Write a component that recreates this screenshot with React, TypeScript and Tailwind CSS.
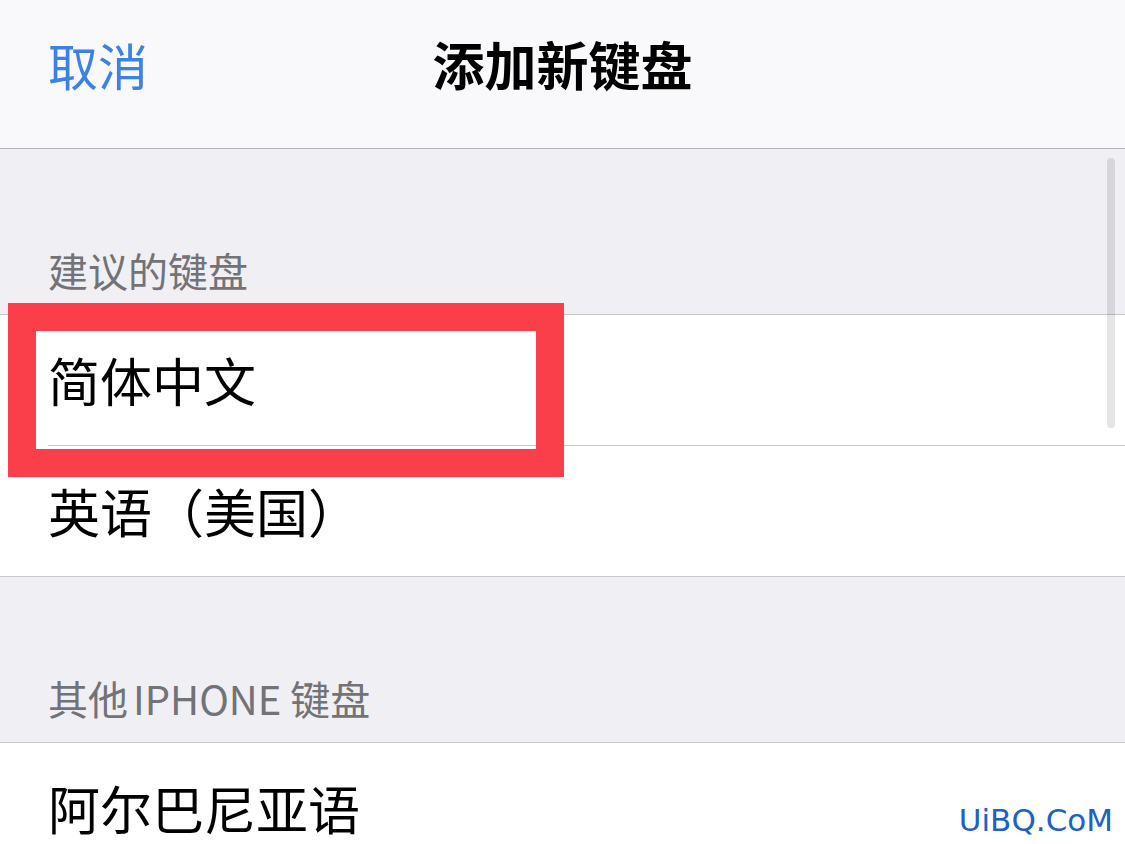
import React from "react"

const cjk = { fontFamily: '"Noto Sans CJK SC", "Noto Sans", sans-serif' }

function SectionHeader({ children }: { children: React.ReactNode }) {
  return (
    <div className="h-[165px] flex items-end pl-[48px] pb-[24px] bg-[#efeff4]">
      <div className="text-[40px] leading-[40px] text-[#727277]">{children}</div>
    </div>
  )
}

function Row({ label, inset = false }: { label: React.ReactNode; inset?: boolean }) {
  return (
    <div className="bg-white">
      <div className="h-[130px] flex items-center pl-[48px] text-[52px] leading-none text-black">
        {label}
      </div>
      <div className={inset ? "h-px bg-[#c8c7cc] ml-[48px]" : "h-px bg-[#c8c7cc]"} />
    </div>
  )
}

export default function App() {
  return (
    <div className="relative w-[1125px] h-[844px] overflow-hidden bg-[#efeff4]" style={cjk}>
      {/* nav bar */}
      <header className="relative h-[149px] bg-[#f9f9fb] border-b border-[#b4b4b8] flex items-center pb-5">
        <button className="pl-[48px] text-[50px] leading-none text-[#3b82e4]">取消</button>
        <h1 className="absolute left-0 right-0 text-center text-[52px] leading-none font-bold text-black pointer-events-none">
          添加新键盘
        </h1>
      </header>

      <SectionHeader>建议的键盘</SectionHeader>
      <div className="h-px bg-[#c8c7cc]" />
      <Row label="简体中文" inset />
      <Row label="英语（美国）" />

      <SectionHeader>
        其他<span className="ml-[5px]">IPHONE</span> 键盘
      </SectionHeader>
      <div className="h-px bg-[#c8c7cc]" />
      <Row label="阿尔巴尼亚语" inset />

      {/* highlight box */}
      <div className="absolute left-[8px] top-[303px] w-[556px] h-[174px] border-[28px] border-[#fa3f4b]" />

      {/* scroll indicator */}
      <div className="absolute right-[10px] top-[158px] w-[8px] h-[270px] rounded-full bg-black/10" />

      {/* watermark */}
      <div
        className="absolute right-[12px] bottom-[8px] text-[31px] leading-none text-[#1b62c4]"
        style={{ fontFamily: '"DejaVu Sans", sans-serif' }}
      >
        UiBQ.CoM
      </div>
    </div>
  )
}
